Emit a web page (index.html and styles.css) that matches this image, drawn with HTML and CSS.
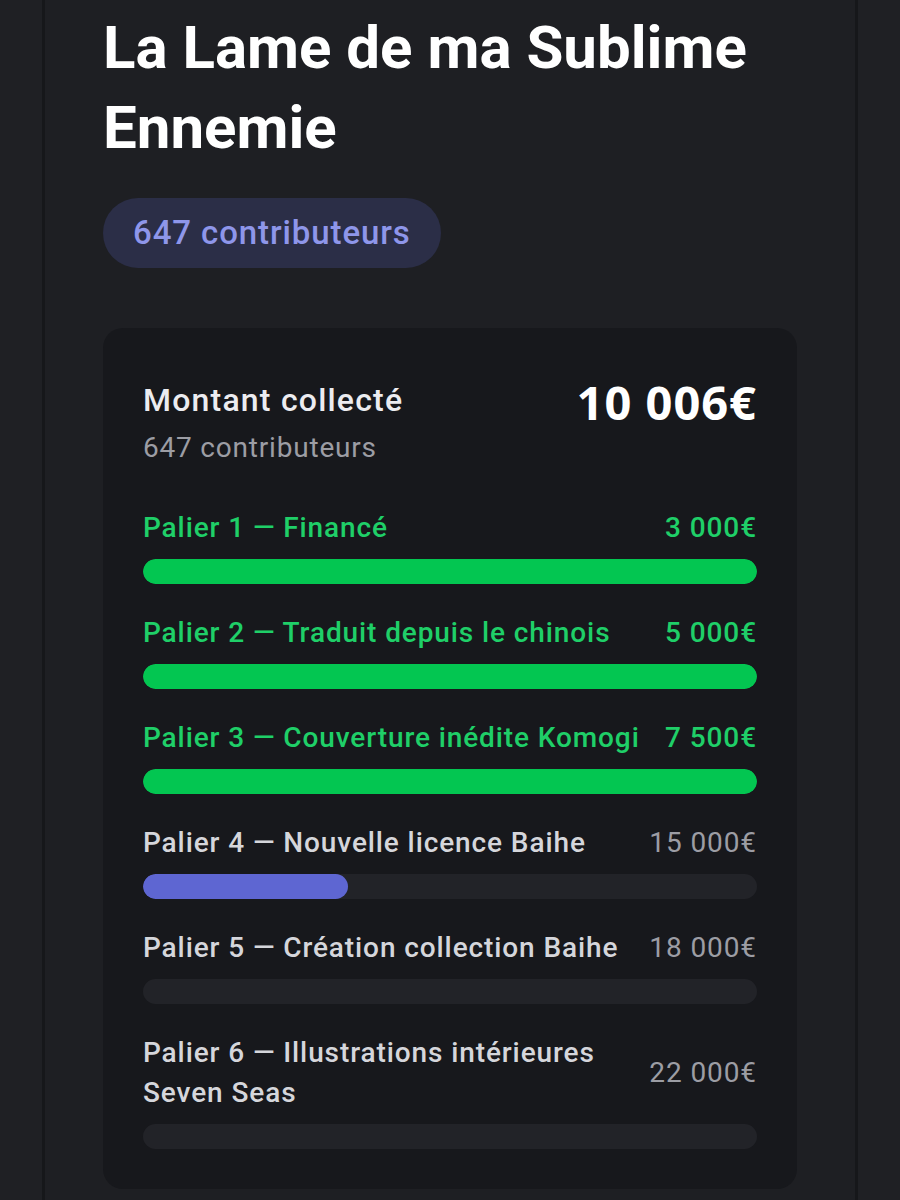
FILE: index.html
```html
<!DOCTYPE html>
<html lang="fr">
<head>
    <meta charset="UTF-8">
    <meta name="viewport" content="width=device-width, initial-scale=1.0">
    <title>La Lame de ma Sublime Ennemie</title>
    <link rel="stylesheet" href="styles.css">
</head>
<body>

<div class="page">
    <h1>La Lame de ma Sublime Ennemie</h1>

    <span class="pill">647 contributeurs</span>

    <div class="funding">
        <div class="funding-head">
            <div>
                <p class="funding-title">Montant collecté</p>
                <p class="funding-sub">647 contributeurs</p>
            </div>
            <div class="funding-total">10 006€</div>
        </div>

        <div class="tier done">
            <div class="tier-head">
                <span class="tier-name">Palier 1 — Financé</span>
                <span class="tier-goal">3 000€</span>
            </div>
            <div class="bar"><div class="fill" style="width: 100%"></div></div>
        </div>

        <div class="tier done">
            <div class="tier-head">
                <span class="tier-name">Palier 2 — Traduit depuis le chinois</span>
                <span class="tier-goal">5 000€</span>
            </div>
            <div class="bar"><div class="fill" style="width: 100%"></div></div>
        </div>

        <div class="tier done">
            <div class="tier-head">
                <span class="tier-name">Palier 3 — Couverture inédite Komogi</span>
                <span class="tier-goal">7 500€</span>
            </div>
            <div class="bar"><div class="fill" style="width: 100%"></div></div>
        </div>

        <div class="tier">
            <div class="tier-head">
                <span class="tier-name">Palier 4 — Nouvelle licence Baihe</span>
                <span class="tier-goal">15 000€</span>
            </div>
            <div class="bar"><div class="fill" style="width: 33.4%"></div></div>
        </div>

        <div class="tier">
            <div class="tier-head">
                <span class="tier-name">Palier 5 — Création collection Baihe</span>
                <span class="tier-goal">18 000€</span>
            </div>
            <div class="bar"><div class="fill" style="width: 0%"></div></div>
        </div>

        <div class="tier">
            <div class="tier-head">
                <span class="tier-name">Palier 6 — Illustrations intérieures Seven Seas</span>
                <span class="tier-goal">22 000€</span>
            </div>
            <div class="bar"><div class="fill" style="width: 0%"></div></div>
        </div>
    </div>
</div>

</body>
</html>
```

FILE: styles.css
```css
body {
    margin: 0;
    font-family: Roboto, "Noto Sans", sans-serif;
    background-color: #1f2024;
    color: #e6e7eb;
}
.page {
    width: 816px;
    min-height: 1200px;
    margin: 0 auto;
    box-sizing: border-box;
    padding: 8px 58px 40px;
    background-color: #1e1f23;
    border-left: 3px solid #16171a;
    border-right: 3px solid #16171a;
}
h1 {
    margin: 0;
    font-size: 60px;
    line-height: 80px;
    font-weight: 700;
    color: #ffffff;
}
.pill {
    display: inline-block;
    margin-top: 30px;
    padding: 0 30px;
    height: 70px;
    line-height: 70px;
    border-radius: 35px;
    background-color: #2b2e47;
    color: #8e96ea;
    font-size: 33px;
    font-weight: 500;
    letter-spacing: 0.9px;
}
.funding {
    margin-top: 60px;
    padding: 51px 40px 40px;
    border-radius: 20px;
    background-color: #17181c;
}
.funding-head {
    display: flex;
    justify-content: space-between;
    align-items: flex-start;
    margin-bottom: 42px;
}
.funding-head p {
    margin: 0;
}
.funding-title {
    font-size: 32px;
    line-height: 42px;
    font-weight: 500;
    letter-spacing: 1.2px;
    color: #ececf0;
}
.funding-sub {
    margin-top: 9px !important;
    font-size: 28px;
    line-height: 36px;
    letter-spacing: 0.8px;
    color: #9c9da4;
}
.funding-total {
    margin-top: -4px;
    font-family: "Open Sans", Roboto, sans-serif;
    font-size: 47px;
    line-height: 54px;
    font-weight: 700;
    letter-spacing: 1px;
    color: #ffffff;
}
.tier {
    margin-bottom: 29px;
}
.tier:last-child {
    margin-bottom: 0;
}
.tier-head {
    display: flex;
    justify-content: space-between;
    align-items: center;
    gap: 24px;
    font-size: 28px;
    line-height: 40px;
    letter-spacing: 0.9px;
}
.tier-name {
    font-weight: 500;
    color: #d5d6db;
}
.tier-goal {
    white-space: nowrap;
    color: #9c9da4;
}
.bar {
    height: 25px;
    margin-top: 11px;
    border-radius: 13px;
    background-color: #222328;
    overflow: hidden;
}
.fill {
    height: 100%;
    border-radius: 13px;
    background-color: #5e66d2;
}
.done .tier-name,
.done .tier-goal {
    color: #1fcf68;
    font-weight: 500;
}
.done .fill {
    background-color: #03c651;
}
```
